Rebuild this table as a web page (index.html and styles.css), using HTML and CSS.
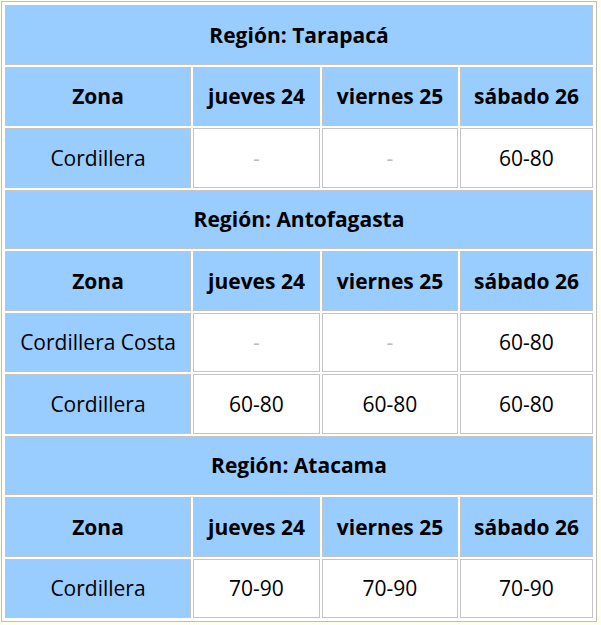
FILE: index.html
```html
<!DOCTYPE html>
<html lang="es">
<head>
<meta charset="utf-8">
<title>Pronóstico</title>
<link rel="stylesheet" href="styles.css">
</head>
<body>
<table class="forecast">
  <colgroup>
    <col class="c-zona">
    <col class="c-d1">
    <col class="c-d2">
    <col class="c-d3">
  </colgroup>
  <tbody>
    <tr><th class="region" colspan="4">Región: Tarapacá</th></tr>
    <tr><th class="head">Zona</th><th class="head">jueves 24</th><th class="head">viernes 25</th><th class="head">sábado 26</th></tr>
    <tr><td class="zona">Cordillera</td><td class="val empty">-</td><td class="val empty">-</td><td class="val">60-80</td></tr>

    <tr><th class="region" colspan="4">Región: Antofagasta</th></tr>
    <tr><th class="head">Zona</th><th class="head">jueves 24</th><th class="head">viernes 25</th><th class="head">sábado 26</th></tr>
    <tr><td class="zona">Cordillera Costa</td><td class="val empty">-</td><td class="val empty">-</td><td class="val">60-80</td></tr>
    <tr><td class="zona">Cordillera</td><td class="val">60-80</td><td class="val">60-80</td><td class="val">60-80</td></tr>

    <tr><th class="region" colspan="4">Región: Atacama</th></tr>
    <tr><th class="head">Zona</th><th class="head">jueves 24</th><th class="head">viernes 25</th><th class="head">sábado 26</th></tr>
    <tr><td class="zona">Cordillera</td><td class="val">70-90</td><td class="val">70-90</td><td class="val">70-90</td></tr>
  </tbody>
</table>
</body>
</html>
```
FILE: styles.css
```css
html, body {
  margin: 0;
  padding: 0;
  background: #ffffee;
}
body {
  padding: 1px;
  font-family: "Open Sans", "DejaVu Sans", sans-serif;
}
.forecast {
  width: 596px;
  border: 1px solid #bdbdbd;
  border-collapse: separate;
  border-spacing: 2px;
  padding: 1px;
  background: #ffffff;
  table-layout: fixed;
}
.c-zona { width: 186px; }
.c-d1 { width: 127px; }
.c-d2 { width: 136px; }
.c-d3 { width: 133px; }
.forecast th,
.forecast td {
  height: 59.5px;
  padding: 0;
  border: 1px solid #c4c4c4;
  text-align: center;
  vertical-align: middle;
  font-size: 21px;
  color: #000;
  box-sizing: border-box;
}
.forecast th {
  background: #99ccff;
  font-weight: 700;
}
.forecast td.zona {
  background: #99ccff;
  font-weight: 400;
}
.forecast td.val {
  background: #ffffff;
}
.forecast td.empty {
  color: #bdbdbd;
}
```
